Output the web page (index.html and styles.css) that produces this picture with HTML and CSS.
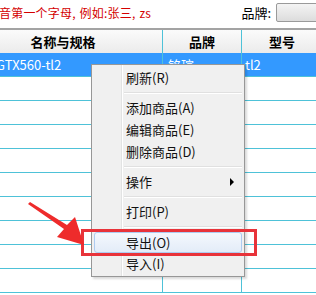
FILE: index.html
```html
<!DOCTYPE html>
<html lang="zh-CN">
<head>
    <meta charset="UTF-8" />
    <title>商品列表</title>
    <link rel="stylesheet" href="styles.css">
</head>
<body>

    <!-- Search bar -->
    <div class="topbar">
        <span class="hint">音第一个字母, 例如:张三, zs</span>
        <span class="brand-label">品牌:</span>
        <span class="brand-input"></span>
    </div>

    <!-- Grid -->
    <div class="grid">
        <div class="row head">
            <div class="cell c1">名称与规格</div>
            <div class="cell c2">品牌</div>
            <div class="cell c3">型号</div>
        </div>
        <div class="row selected">
            <div class="cell c1 left">GTX560-tl2</div>
            <div class="cell c2 left">铭瑄</div>
            <div class="cell c3 left">tl2</div>
        </div>
        <div class="row"><div class="cell c1"></div><div class="cell c2"></div><div class="cell c3"></div></div>
        <div class="row"><div class="cell c1"></div><div class="cell c2"></div><div class="cell c3"></div></div>
        <div class="row"><div class="cell c1"></div><div class="cell c2"></div><div class="cell c3"></div></div>
        <div class="row"><div class="cell c1"></div><div class="cell c2"></div><div class="cell c3"></div></div>
        <div class="row"><div class="cell c1"></div><div class="cell c2"></div><div class="cell c3"></div></div>
        <div class="row"><div class="cell c1"></div><div class="cell c2"></div><div class="cell c3"></div></div>
        <div class="row"><div class="cell c1"></div><div class="cell c2"></div><div class="cell c3"></div></div>
        <div class="row"><div class="cell c1"></div><div class="cell c2"></div><div class="cell c3"></div></div>
        <div class="row"><div class="cell c1"></div><div class="cell c2"></div><div class="cell c3"></div></div>
    </div>

    <!-- Context menu -->
    <div class="menu">
        <div class="item">刷新(R)</div>
        <div class="sep"></div>
        <div class="item">添加商品(A)</div>
        <div class="item">编辑商品(E)</div>
        <div class="item">删除商品(D)</div>
        <div class="sep"></div>
        <div class="item sub">操作<span class="arrow"></span></div>
        <div class="sep"></div>
        <div class="item">打印(P)</div>
        <div class="sep"></div>
        <div class="item hot">导出(O)</div>
        <div class="item">导入(I)</div>
    </div>

    <!-- Annotation -->
    <div class="mark"></div>
    <svg class="pointer" width="90" height="60" viewBox="0 0 90 60">
        <polygon points="28,8 30,6 67,29 75,21 84,49 57,41 64,33" fill="#ee2b2b"/>
    </svg>

</body>
</html>
```

FILE: styles.css
```css
body {
    margin: 0;
    width: 316px;
    height: 295px;
    overflow: hidden;
    background: #fff;
    font-family: "Noto Sans CJK SC", "Microsoft YaHei", sans-serif;
    font-size: 12px;
    color: #000;
    position: relative;
}

.topbar {
    height: 30px;
    border-bottom: 2px solid #a3a3a3;
    display: flex;
    align-items: center;
    box-sizing: border-box;
    padding-bottom: 4px;
}

.hint {
    color: #d40000;
    font-size: 12px;
    margin-left: -1px;
    letter-spacing: 0.2px;
    word-spacing: 1px;
}

.brand-label {
    margin-left: auto;
    font-size: 13px;
    margin-right: 5px;
}

.brand-input {
    width: 60px;
    height: 17px;
    margin-right: -22px;
    border: 1px solid #9a9a9a;
    border-radius: 2px;
    background: linear-gradient(#f4f4f4, #dcdcdc);
}

.grid {
    margin-left: -36px;
    width: 360px;
}

.row {
    display: flex;
    height: 24px;
    border-bottom: 1px solid #4ec2d8;
    box-sizing: border-box;
}

.row.head {
    height: 23px;
    background: linear-gradient(#fbfbfb, #ebebeb);
    border-bottom: none;
    font-weight: bold;
    font-size: 13px;
}

.row.selected {
    background: #3399ff;
    color: #fff;
}

.cell {
    display: flex;
    align-items: center;
    justify-content: center;
    flex-shrink: 0;
    border-right: 1px solid #4ec2d8;
    box-sizing: border-box;
}

.cell.left {
    justify-content: flex-start;
    font-size: 13px;
}

.c1 { width: 199px; }
.c2 { width: 79px; }
.c3 { width: 80px; border-right: none; }

.c1.left { padding-left: 32px; }
.c2.left { padding-left: 5px; }
.c3.left { padding-left: 3px; }

/* Context menu */
.menu {
    position: absolute;
    left: 91px;
    top: 64px;
    width: 154px;
    height: 213px;
    box-sizing: border-box;
    border: 1px solid #979797;
    background: #f0f0f0 linear-gradient(90deg, transparent 29px, #e2e3e3 29px, #e2e3e3 30px, #fff 30px, #fff 31px, transparent 31px);
    padding: 2px;
    box-shadow: 2px 2px 2px rgba(0, 0, 0, 0.15);
}

.item {
    height: 22px;
    line-height: 22px;
    padding-left: 32px;
    font-size: 13px;
    color: #111;
    position: relative;
    box-sizing: border-box;
}

.item.hot {
    border: 1px solid #aeccf1;
    border-radius: 3px;
    background: linear-gradient(#f4f8fd, #e3ecf8);
    line-height: 20px;
    padding-left: 31px;
    height: 21px;
    margin-top: 1px;
}

.arrow {
    position: absolute;
    right: 8px;
    top: 7px;
    border-left: 4px solid #000;
    border-top: 4px solid transparent;
    border-bottom: 4px solid transparent;
}

.sep {
    height: 8px;
    margin-left: 30px;
    background: linear-gradient(transparent 3px, #e0e0e0 3px, #e0e0e0 4px, #fff 4px, #fff 5px, transparent 5px);
}

/* Annotation */
.mark {
    position: absolute;
    left: 81px;
    top: 229px;
    width: 176px;
    height: 27px;
    box-sizing: border-box;
    border: 3px solid #e8333a;
}

.pointer {
    position: absolute;
    left: 0;
    top: 196px;
}
```
